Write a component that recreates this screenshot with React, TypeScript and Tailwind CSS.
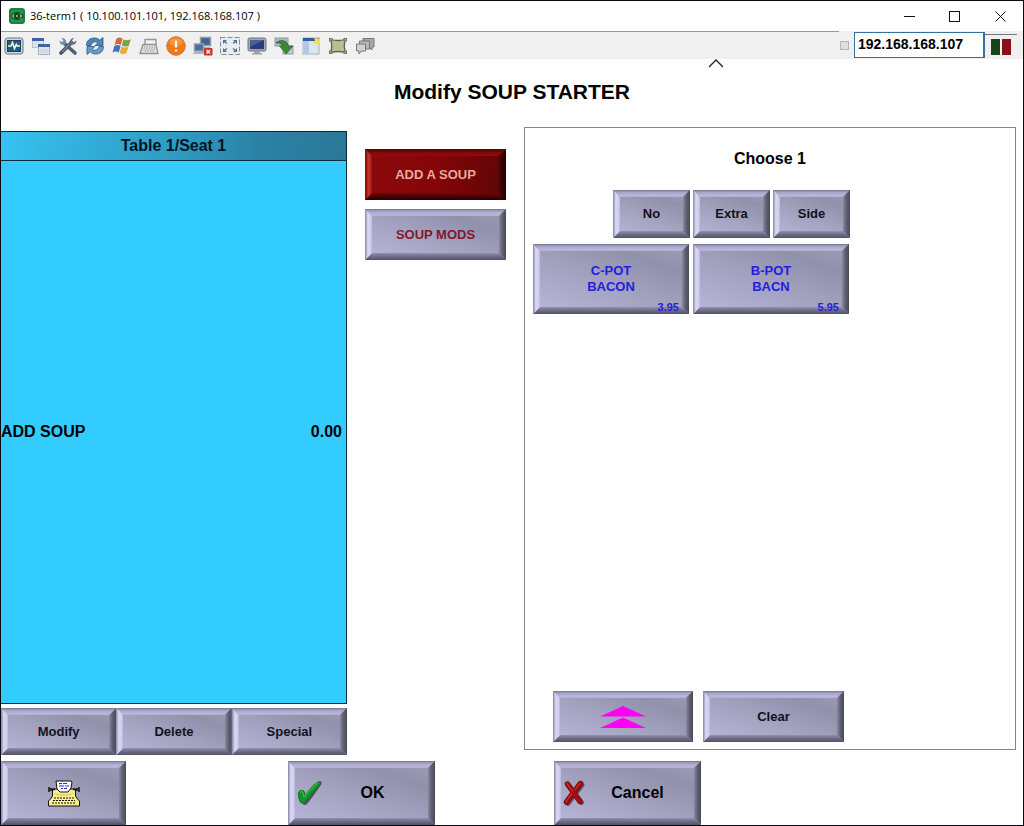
import React from "react";

type Tone = "lavender" | "red";

const faces: Record<Tone, string> = {
  lavender: "bg-[linear-gradient(20deg,#bab8dc_0%,#a5a4c2_40%,#9291ac_75%,#a09fbb_100%)]",
  red: "bg-[linear-gradient(100deg,#8c0a0c_0%,#850507_50%,#5c0608_100%)]",
};

const edges: Record<Tone, { top: string; left: string; right: string; bottom: string }> = {
  lavender: {
    top: "bg-[linear-gradient(180deg,#73728a_0%,#a5a3c6_30%,#bab8da_80%,#aeadcc_100%)]",
    left: "bg-[linear-gradient(90deg,#8583a3_0%,#d9d8f3_40%,#d2d0ee_75%,#bbb9da_100%)]",
    right: "bg-[linear-gradient(270deg,#4a4a56_0%,#5f5f73_50%,#8a899f_100%)]",
    bottom: "bg-[linear-gradient(0deg,#525264_0%,#6d6c86_50%,#9290ae_100%)]",
  },
  red: {
    top: "bg-[linear-gradient(180deg,#4c0304_0%,#840709_50%,#900c0e_100%)]",
    left: "bg-[linear-gradient(90deg,#7a0506_0%,#c9372c_55%,#9c1110_100%)]",
    right: "bg-[linear-gradient(270deg,#210102_0%,#380304_60%,#500506_100%)]",
    bottom: "bg-[linear-gradient(0deg,#240102_0%,#4a0304_50%,#720507_100%)]",
  },
};

function BevelButton({
  children,
  className = "",
  tone = "lavender",
  label,
}: {
  children: React.ReactNode;
  className?: string;
  tone?: Tone;
  label?: string;
}) {
  const e = edges[tone];
  return (
    <button
      type="button"
      aria-label={label}
      className={`relative flex items-center justify-center font-bold ${faces[tone]} ${className}`}
    >
      <span aria-hidden="true" className={`absolute inset-x-0 top-0 h-[7px] [clip-path:polygon(0_0,100%_0,calc(100%_-_7px)_100%,7px_100%)] ${e.top}`} />
      <span aria-hidden="true" className={`absolute inset-x-0 bottom-0 h-[7px] [clip-path:polygon(7px_0,calc(100%_-_7px)_0,100%_100%,0_100%)] ${e.bottom}`} />
      <span aria-hidden="true" className={`absolute inset-y-0 left-0 w-[7px] [clip-path:polygon(0_0,100%_7px,100%_calc(100%_-_7px),0_100%)] ${e.left}`} />
      <span aria-hidden="true" className={`absolute inset-y-0 right-0 w-[7px] [clip-path:polygon(0_7px,100%_0,100%_100%,0_calc(100%_-_7px))] ${e.right}`} />
      {children}
    </button>
  );
}

function Svg({ children }: { children: React.ReactNode }) {
  return (
    <svg viewBox="0 0 20 20" className="h-5 w-5" aria-hidden="true">
      {children}
    </svg>
  );
}

const tools: { name: string; art: React.ReactNode }[] = [
  {
    name: "Monitor activity",
    art: (
      <>
        <rect x="1" y="2" width="18" height="16" rx="2.5" fill="#d3d8db" stroke="#65727b" />
        <rect x="3.500" y="4.500" width="13" height="11" fill="#245a86" stroke="#163e60" />
        <path d="M4 10h3l1.500-3.500 2 6 1.800-4 1 1.500H16" fill="none" stroke="#f0f7d8" strokeWidth="1.600" />
      </>
    ),
  },
  {
    name: "Windows",
    art: (
      <>
        <rect x="1.500" y="2.500" width="11" height="9" fill="#dde3ea" stroke="#b9c1cc" />
        <path d="M1 3.500h12" stroke="#3a64a5" strokeWidth="3" />
        <rect x="7.500" y="8.500" width="11" height="10" fill="#dde3ea" stroke="#a9b3c0" />
        <path d="M7 9.500h12" stroke="#3a64a5" strokeWidth="3" />
        <path d="M9 14h8M9 16h8" stroke="#c5ced9" />
      </>
    ),
  },
  {
    name: "Tools",
    art: (
      <>
        <path d="M3 17 13 7" stroke="#41556c" strokeWidth="3.800" strokeLinecap="round" />
        <path d="M12 7.500c-1-3 1-5.500 4-5.500l-2 2.500 1.800 1.800L18.500 4.500c0 3.500-3 5-5 4z" fill="#5f7388" />
        <path d="M7 8 17 17" stroke="#4d6074" strokeWidth="3.600" strokeLinecap="round" />
        <path d="M8 7.500C9 4 6.500 2 3.500 2l2 2.500L4 6.300 1.500 4.500c0 3.500 2.500 5 5 4z" fill="#7b8c9d" />
        <path d="m4 16 8-8.500" stroke="#a9b8c8" strokeWidth=".8" />
      </>
    ),
  },
  {
    name: "Refresh",
    art: (
      <>
        <path d="M1.500 9.500C1.500 4.500 5 2 9.500 2c2.300 0 4 .8 5.200 2.200L18 1.500v8h-8l3-2.800C10.500 4.700 7 6 6 9.500z" fill="#4e84b8" stroke="#2a5888" strokeWidth=".8" />
        <path d="M18.500 10.500c0 5-3.500 7.500-8 7.500-2.300 0-4-.8-5.200-2.200L2 18.500v-8h8l-3 2.800c2.500 2 6 .7 7-2.800z" fill="#6b9ac8" stroke="#2a5888" strokeWidth=".8" />
      </>
    ),
  },
  {
    name: "Start menu",
    art: (
      <>
        <path d="M4.500 2.500c2-1.500 4-1.500 6 0L8.800 9c-2-1.300-4.200-1.300-6.300 0z" fill="#d9663c" />
        <path d="M11.300 3.200c2.200 1.300 4.700 1.300 7.500 0l-2 6.500c-2.500 1.300-5 1.200-7-.2z" fill="#7aa348" />
        <path d="M2.300 10c2-1.300 4.200-1.300 6.300 0l-1.800 6.500c-2-1.300-4.200-1.300-6.300 0z" fill="#4173b5" />
        <path d="M9.500 10.500c2 1.300 4.500 1.300 7 0l-2 6.600c-2.300 1.300-4.800 1.200-6.800-.2z" fill="#e3ae3c" />
      </>
    ),
  },
  {
    name: "Keyboard",
    art: (
      <>
        <path d="M6 9V3.500h11V8" fill="none" stroke="#989898" strokeWidth="1.400" />
        <path d="M4 8.500h13l2 9H1z" fill="#e1e1df" stroke="#929292" strokeWidth="1.300" />
        <path d="M5 11h11M4.500 13h12M6 15h9" stroke="#999" strokeDasharray="1.500 1" />
      </>
    ),
  },
  {
    name: "Alert",
    art: (
      <>
        <circle cx="10" cy="10" r="9.300" fill="#ee791b" stroke="#d77b36" />
        <ellipse cx="10" cy="6" rx="6.500" ry="4" fill="#f6a052" opacity=".7" />
        <path d="M10 4.500v7M10 13.500v2" stroke="#fff8e8" strokeWidth="2.200" />
      </>
    ),
  },
  {
    name: "Disconnect",
    art: (
      <>
        <rect x="7.500" y="1.500" width="10" height="8" fill="#3e6593" stroke="#929ba6" strokeWidth="1.500" />
        <path d="M9 11h8l1 2H8z" fill="#aeb5bd" />
        <rect x="1.500" y="8" width="9" height="7" fill="#47709f" stroke="#929ba6" strokeWidth="1.500" />
        <path d="M1 16h10l1 2H0z" fill="#aeb5bd" />
        <rect x="11" y="12" width="8.500" height="7.500" rx="1" fill="#c8342b" />
        <path d="m13.500 14 3.500 3.500m0-3.500-3.500 3.500" stroke="#fff" strokeWidth="1.400" />
      </>
    ),
  },
  {
    name: "Full screen",
    art: (
      <>
        <rect x=".5" y="1.500" width="19" height="17" fill="#e8edf1" stroke="#7f8e99" strokeDasharray="5 2" />
        <path d="M3 4h4L3 8zM17 4v4l-4-4zM3 16v-4l4 4zM17 16h-4l4-4z" fill="#54748e" />
        <path d="m4 5 3 2.500M16 5l-3 2.500M4 15l3-2.500M16 15l-3-2.500" stroke="#54748e" strokeWidth="1.300" />
      </>
    ),
  },
  {
    name: "Display",
    art: (
      <>
        <rect x="1" y="2" width="18" height="13" rx="1.500" fill="#a3a7b0" stroke="#70757f" />
        <rect x="3" y="4" width="14" height="9" fill="#253f7c" />
        <path d="M3 4h14L3 11z" fill="#486197" />
        <path d="M8 15h4l1 2h2v1.500H5V17h2z" fill="#9c9fa5" />
      </>
    ),
  },
  {
    name: "Transfer",
    art: (
      <>
        <rect x="1" y="2" width="13" height="8" fill="#a9bac6" stroke="#8a9ba8" />
        <rect x="9" y="10" width="10" height="8" fill="#bccad4" stroke="#8a9ba8" />
        <path d="M2 7c4-4 11-3 12.500 3H19l-7 8-6.500-8h3.300C8 8 6 6.500 2 7z" fill="#3f8636" stroke="#25611f" strokeWidth=".7" />
      </>
    ),
  },
  {
    name: "New window",
    art: (
      <>
        <rect x="2" y="2" width="16" height="16" fill="#dce6f0" stroke="#a3b2c3" />
        <path d="M2 3.500h16" stroke="#315da5" strokeWidth="3" />
        <path d="M3 5h5v12H3z" fill="#b2c8e0" />
        <path d="m16 0 1 3 3-.5-1.500 2.500 1.500 2.500-2.900-.3L15.500 10l-.8-2.800-3.200-.5L14 4.500 13 1.500l2.200 1z" fill="#efe05a" />
      </>
    ),
  },
  {
    name: "Resize",
    art: (
      <>
        <path d="M3 3.500q7 2 14 0-1.500 6.500 0 13-7-2-14 0 1.500-6.500 0-13z" fill="#b9bf91" stroke="#5f644f" strokeWidth="1.300" />
        <path d="M1 2h3.500v3.500H1zM15.500 2H19v3.500h-3.500zM1 14.500h3.500V18H1zM15.500 14.500H19V18h-3.500z" fill="#77776c" />
        <path d="M2.300 3.300h1v1h-1zM16.700 3.300h1v1h-1zM2.300 15.700h1v1h-1zM16.700 15.700h1v1h-1z" fill="#ddd" />
      </>
    ),
  },
  {
    name: "Messages",
    art: (
      <>
        <path d="M8 2.500h11V11h-2v3l-3-3H8z" fill="#a7aaa8" stroke="#747775" />
        <path d="M4.500 5h10v8H9l-3 3v-3H4.500z" fill="#b5b8b5" stroke="#747775" />
        <path d="M1.500 8h9v7H6.500L4 18v-3H1.500z" fill="#d0d1cf" stroke="#777a78" />
      </>
    ),
  },
];

function TitleBar() {
  return (
    <header className="flex h-[30px] items-center bg-white">
      <svg viewBox="0 0 16 16" className="ml-2 h-4 w-4" aria-hidden="true">
        <rect width="16" height="16" rx="3" fill="#279345" />
        <rect x="1" y="1" width="14" height="14" rx="2" fill="none" stroke="#166b31" />
        <path d="M1.500 8q6.500-7 13 0-6.500 7-13 0z" fill="#71ae7e" stroke="#0b3a18" />
        <circle cx="8" cy="8" r="3" fill="#133e20" />
        <circle cx="8" cy="8" r="1" fill="#a8d3ad" />
      </svg>
      <span className="ml-[5px] flex-1 font-['Open_Sans','Noto_Sans',sans-serif] text-[11px] text-black">
        36-term1 ( 10.100.101.101, 192.168.168.107 )
      </span>
      <button type="button" aria-label="Minimize" className="flex h-full w-[46px] items-center justify-center">
        <svg viewBox="0 0 11 11" className="h-[11px] w-[11px]"><path d="M0 5.500h11" stroke="#111" /></svg>
      </button>
      <button type="button" aria-label="Maximize" className="flex h-full w-[45px] items-center justify-center">
        <svg viewBox="0 0 11 11" className="h-[11px] w-[11px]"><rect x=".5" y=".5" width="10" height="10" fill="none" stroke="#111" /></svg>
      </button>
      <button type="button" aria-label="Close" className="flex h-full w-[46px] items-center justify-center">
        <svg viewBox="0 0 11 11" className="h-[11px] w-[11px]"><path d="m.5.5 10 10m0-10-10 10" stroke="#111" /></svg>
      </button>
    </header>
  );
}

function Toolbar() {
  return (
    <div className="flex h-7 bg-[#f0f0f0]">
      <div className="flex flex-1 border-t border-[#969696]">
        {tools.map((t) => (
          <button key={t.name} type="button" aria-label={t.name} className="flex w-[27px] items-center pl-[3px]">
            <Svg>{t.art}</Svg>
          </button>
        ))}
      </div>
      <div className="flex items-center">
        <input type="checkbox" aria-label="Lock address" className="mr-[5px] ml-px h-[9px] w-[9px] appearance-none border border-[#b5b5b5] bg-[#dedede]" />
        <input
          type="text"
          aria-label="Terminal address"
          defaultValue="192.168.168.107"
          className="h-[26px] w-[131px] border border-r-2 border-[#35719b] bg-white px-[3px] pb-[2px] text-[14px] font-bold text-black"
        />
        <div className="mt-[2px] mr-[6px] flex h-[25px] w-8 items-center justify-center gap-[2px] border-t border-[#777]">
          <span className="h-4 w-[9px] bg-[#164516]" />
          <span className="h-4 w-[9px] bg-[#8b0d17]" />
        </div>
      </div>
    </div>
  );
}

function OrderPanel() {
  return (
    <section className="flex flex-col pt-1">
      <div className="flex flex-1 flex-col border border-l-0 border-[#082c3c] bg-[#33ccff]">
        <h2 className="flex h-[29px] items-center justify-center border-b border-[#082c3c] bg-[linear-gradient(100deg,#36c4f4_0%,#33b6e2_15%,#2f9cc3_50%,#2a82a5_75%,#2a7897_100%)] text-[16px] font-bold text-[#04151e]">
          Table 1/Seat 1
        </h2>
        <div className="flex flex-1 items-center justify-between pr-1 text-[16px] font-bold">
          <span>ADD SOUP</span>
          <span>0.00</span>
        </div>
      </div>
      <div className="mt-1 grid grid-cols-3 text-[13px] text-[#111120]">
        <BevelButton className="h-[47px]">Modify</BevelButton>
        <BevelButton className="h-[47px]">Delete</BevelButton>
        <BevelButton className="h-[47px]">Special</BevelButton>
      </div>
    </section>
  );
}

function PriceItem({ top, bottom, price }: { top: string; bottom: string; price: string }) {
  return (
    <BevelButton className="col-span-2 h-[70px] w-[156px] text-[13px] leading-4 text-[#2320e0]">
      <span>
        {top}
        <br />
        {bottom}
      </span>
      <span className="absolute right-[10px] bottom-0 text-[11px] leading-[14px]">{price}</span>
    </BevelButton>
  );
}

function ChoicePanel() {
  return (
    <section className="mb-[5px] flex flex-col border border-[#858585]">
      <h2 className="mt-[21px] text-center text-[16px] leading-5 font-bold">Choose 1</h2>
      <div className="mt-[21px] grid grid-cols-[repeat(4,77px)] gap-x-[3px] gap-y-[6px] pl-2 text-[13px] text-[#111120]">
        <BevelButton className="col-start-2 h-12">No</BevelButton>
        <BevelButton className="h-12">Extra</BevelButton>
        <BevelButton className="h-12">Side</BevelButton>
        <PriceItem top="C-POT" bottom="BACON" price="3.95" />
        <PriceItem top="B-POT" bottom="BACN" price="5.95" />
      </div>
      <div className="mt-auto mb-[7px] flex gap-[10px] pl-7 text-[13px] text-[#111120]">
        <BevelButton className="h-[51px] w-[140px]" label="Page up">
          <svg viewBox="0 0 46 22" className="h-[22px] w-[46px]" aria-hidden="true">
            <path d="M0 10.500 23 0l23 10.500zM0 22 23 11.500 46 22z" fill="#ff00f5" />
          </svg>
        </BevelButton>
        <BevelButton className="h-[51px] w-[141px]">Clear</BevelButton>
      </div>
    </section>
  );
}

function Typewriter() {
  return (
    <svg viewBox="0 0 32 27" className="h-[27px] w-8" aria-hidden="true">
      <path d="M4.500 9h23v7l2 3 2 2v5H.5v-5l2-2 2-3z" fill="#f8f08c" stroke="#111" />
      <path d="M1 7v5M3 8v3M3 9.500h4M31 7v5M29 8v3M29 9.500h-4" stroke="#111" strokeWidth="1.500" />
      <path d="M8 1h15l1 1-1 6-3 4h-8L9 9z" fill="#fff" stroke="#111" />
      <path d="M11 3.500h3m1 0h4M11 6h5m1 0h4M13 8.500h2m1 0h3" stroke="#2929c8" />
      <path d="M7 13q2 2 4 2h9q3 0 5-2" fill="none" stroke="#c9c05a" />
      <path d="M6 18h20M5 20.500h22M4 23h24" stroke="#111" strokeDasharray="2 1" />
    </svg>
  );
}

function Footer() {
  return (
    <footer className="mt-[6px] grid h-16 grid-cols-[125fr_162fr_147fr_119fr_147fr_322fr] text-[16px]">
      <BevelButton label="Keyboard entry">
        <Typewriter />
      </BevelButton>
      <BevelButton className="col-start-3">
        <svg viewBox="0 0 26 26" className="absolute left-[9px] h-[26px] w-[26px]" aria-hidden="true">
          <path d="M3 14c1-2 4-2 5 0l.5 2C13 10 18 5 25 3.500 21 9 16 17 10.500 23.500c-1 2-4 2-5 0z" fill="#444058" opacity=".8" />
          <path d="M1.500 12.500c1-2.500 5-3 6-.5l.7 3C13 9 17 3 23 1.500c1.500 0 1.500 1 1 2C19 9 14 15 9 21.500c-1.500 2-5 2-6 0C2 19 1 15 1.500 12.500z" fill="#119527" stroke="#075915" strokeWidth=".7" />
          <path d="M3 12.500c1-1.200 2.500-1 3 .5l1 4C12 11 16 6 21 3" fill="none" stroke="#3cba48" strokeWidth="1.200" />
        </svg>
        <span className="pl-[22px]">OK</span>
      </BevelButton>
      <BevelButton className="col-start-5">
        <svg viewBox="0 0 22 26" className="absolute left-[9px] h-[26px] w-[22px]" aria-hidden="true">
          <path d="m5.500 5.500 13 17M19 5 5 23.500" stroke="#504253" strokeWidth="4.800" strokeLinecap="round" opacity=".8" />
          <path d="m4.500 4 12.500 17.500M17.500 3.500 3.500 22" stroke="#580709" strokeWidth="5.400" strokeLinecap="round" />
          <path d="m4.500 4 12.500 17.500M17.500 3.500 3.500 22" stroke="#a80c0f" strokeWidth="4.200" strokeLinecap="round" />
          <path d="m4 3.500 5.500 7.500M17 3l-5 6.500M3 21.500l5.500-7.500" stroke="#d6332c" strokeWidth="1.200" strokeLinecap="round" />
        </svg>
        <span className="pl-5">Cancel</span>
      </BevelButton>
    </footer>
  );
}

export default function App() {
  return (
    <div className="flex min-h-screen flex-col border border-[#0a0a12] bg-white font-['Liberation_Sans',Arial,sans-serif] text-black">
      <TitleBar />
      <Toolbar />
      <div className="relative flex h-[68px] items-center justify-center pb-[2px]">
        <h1 className="text-[21px] font-bold">Modify SOUP STARTER</h1>
        <button type="button" aria-label="Collapse toolbar" className="absolute top-0 left-[70%] -translate-x-1/2">
          <svg viewBox="0 0 15 9" className="h-[9px] w-[15px]"><path d="m.5 8 7-7 7 7" fill="none" stroke="#222" strokeWidth="1.400" /></svg>
        </button>
      </div>
      <main className="grid flex-1 grid-cols-[346fr_141fr_492fr] gap-x-[18px] pr-[7px]">
        <OrderPanel />
        <nav aria-label="Modifier groups" className="flex flex-col gap-[9px] pt-[22px] text-[13px]">
          <BevelButton tone="red" className="h-[51px] text-[#e5aaa0]">ADD A SOUP</BevelButton>
          <BevelButton className="h-[51px] text-[#84182b]">SOUP MODS</BevelButton>
        </nav>
        <ChoicePanel />
      </main>
      <Footer />
    </div>
  );
}
